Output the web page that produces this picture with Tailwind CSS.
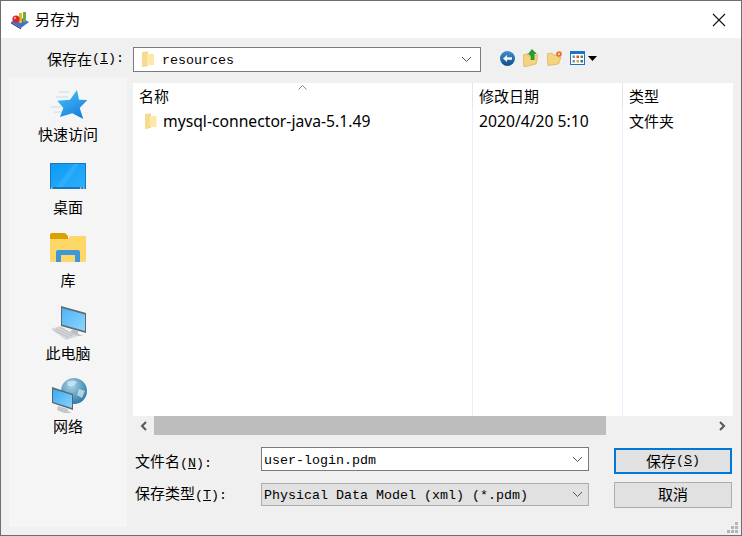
<!DOCTYPE html>
<html>
<head>
    <title>另存为</title>
    <script src="https://cdn.jsdelivr.net/npm/@tailwindcss/browser@4"></script>
</head>
<body class="bg-white">
<div class="w-[742px] h-[536px] flex flex-col overflow-hidden border border-[#6e6e6e] bg-[#f0f0f0] text-black text-[15px] font-['Noto_Sans','Noto_Sans_CJK_SC',sans-serif]">
    <!-- Title bar -->
    <div class="h-[37px] shrink-0 bg-white flex items-center pl-[9px] pr-[15px]">
        <svg class="w-[20px] h-[20px]" viewBox="0 0 20 20">
            <path d="M1 12 L10 7 L19 12 L11 18z" fill="#4a6fc0"/>
            <path d="M1 12 L11 18 L11 19.5 L1 13.5z" fill="#2b4a94"/>
            <rect x="9" y="3" width="3" height="10" fill="#e6b422"/>
            <rect x="13" y="2" width="3" height="10" fill="#6fae3c"/>
            <circle cx="6" cy="9" r="3.6" fill="#d9252a"/>
            <circle cx="5" cy="8" r="1.2" fill="#f59a9c"/>
        </svg>
        <span class="ml-[5px] leading-none">另存为</span>
        <svg class="ml-auto w-[14px] h-[14px]" viewBox="0 0 14 14" fill="none" stroke="#111" stroke-width="1.1">
            <path d="M1 1 L13 13 M13 1 L1 13"/>
        </svg>
    </div>

    <!-- Toolbar -->
    <div class="h-[39px] shrink-0 flex items-center pl-[46px]">
        <div class="w-[86px] flex items-center whitespace-nowrap mt-[3px]">保存在<span class="font-['Liberation_Mono'] text-[13.33px]">(<u>I</u>):</span></div>
        <div class="w-[348px] h-[25px] mt-[3px] bg-white border border-[#7a7a7a] flex items-center pl-[7px] pr-[8px]">
            <svg class="w-[14px] h-[17px]" viewBox="0 0 14 17">
                <path d="M1 1 L7 0.5 L7 15 L1 16z" fill="#f3d27a"/>
                <path d="M3 3 H13 V14 H3z" fill="#fbe9a9"/>
                <path d="M1 1 L6 2 L6 14 L1 16z" fill="#f7dc8e"/>
            </svg>
            <span class="ml-[7px] mt-[3px] font-['Liberation_Mono'] text-[13.33px]">resources</span>
            <svg class="ml-auto w-[11px] h-[7px]" viewBox="0 0 11 7" fill="none" stroke="#555" stroke-width="1"><path d="M1 1 L5.5 5.5 L10 1"/></svg>
        </div>
        <div class="ml-[19px] mt-[1px] flex items-center">
            <svg class="w-[15px] h-[15px]" viewBox="0 0 15 15">
                <defs><linearGradient id="b1" x1="0" y1="0" x2="0" y2="1"><stop offset="0" stop-color="#3f8fd0"/><stop offset="1" stop-color="#0d4f8a"/></linearGradient></defs>
                <circle cx="7.5" cy="7.5" r="7.5" fill="url(#b1)"/>
                <path d="M3 7.5 L7 4 V6.3 H12 V8.7 H7 V11z" fill="#f4f8fc"/>
            </svg>
            <svg class="ml-[8px] w-[15px] h-[18px]" viewBox="0 0 15 18">
                <path d="M0 6 L5 4.5 V7 L15 6 L13 15 L1 18z" fill="#f4d47e" stroke="#cfa84a" stroke-width="0.6"/>
                <path d="M9 0 L14 5 H11.5 V11 H7.5 C8 8 8 7 6.5 6 L5 5z" fill="#2f9a2c"/>
            </svg>
            <svg class="ml-[9px] w-[15px] h-[15px]" viewBox="0 0 15 15">
                <path d="M0 3 L5 2 L6 4 L11 4 V6 H14 L11.5 13 L1 14.500z" fill="#f4d47e" stroke="#cfa84a" stroke-width="0.6"/>
                <circle cx="12" cy="3" r="2.800" fill="#ee6a2c"/>
                <circle cx="12" cy="3" r="1.200" fill="#fbd08a"/>
            </svg>
            <div class="ml-[8px] flex items-center gap-[3px]">
                <svg class="w-[15px] h-[14px]" viewBox="0 0 15 14">
                    <rect x="0" y="0" width="15" height="14" fill="#1a73c9"/>
                    <rect x="1" y="3" width="13" height="10" fill="#fff"/>
                    <rect x="2.500" y="4.500" width="2.500" height="2.500" fill="#7d8ea8"/>
                    <rect x="6.500" y="4.500" width="2.500" height="2.500" fill="#d24a43"/>
                    <rect x="10.500" y="4.500" width="2.500" height="2.500" fill="#3d9a48"/>
                    <rect x="2.500" y="9" width="2.500" height="2.500" fill="#7d8ea8"/>
                    <rect x="6.500" y="9" width="2.500" height="2.500" fill="#e0a62c"/>
                    <rect x="10.500" y="9" width="2.500" height="2.500" fill="#2a6fc0"/>
                </svg>
                <svg class="w-[9px] h-[5px]" viewBox="0 0 9 5"><path d="M0 0 H9 L4.500 5z" fill="#000"/></svg>
            </div>
        </div>
    </div>

    <div class="flex-1 flex pl-[8px] min-h-0">
        <!-- Places sidebar -->
        <div class="w-[118px] h-[450px] bg-[#f5f5f5] pt-[8px] flex flex-col">
            <div class="h-[73px] flex flex-col items-center">
                <svg class="w-[40px] h-[39px] shrink-0" viewBox="0 0 40 39">
                    <defs><linearGradient id="st" x1="0" y1="0" x2="0.6" y2="1"><stop offset="0" stop-color="#4fc0fa"/><stop offset="1" stop-color="#1684e0"/></linearGradient></defs>
                    <path d="M29 5 L31 14.700 L39.300 15 L31.700 23 L35.300 34 L24.300 28.300 L12 32 L15.300 23 L9.300 15.700 L22 14.700z" fill="url(#st)"/>
                    <path d="M11 7 H21 M8 12 H20 M3 22 H13 M6 27 H13" stroke="#bcdff3" stroke-width="1"/>
                </svg>
                <span class="leading-[20px]">快速访问</span>
            </div>
            <div class="h-[73px] flex flex-col items-center">
                <svg class="w-[40px] h-[39px] shrink-0" viewBox="0 0 40 39">
                    <defs><linearGradient id="dk" x1="0" y1="0" x2="1" y2="1"><stop offset="0" stop-color="#0a9bf5"/><stop offset="1" stop-color="#2eaefc"/></linearGradient></defs>
                    <rect x="2" y="5" width="36" height="26" fill="#1777b8"/>
                    <rect x="3" y="6" width="34" height="23" fill="url(#dk)"/>
                    <path d="M8 29 L26 6 H31 L15 29z" fill="#3ab3fb" opacity="0.6"/>
                    <path d="M3 30 h1.500 M32 30 h1.500 M35 30 h1.500" stroke="#fff"/>
                </svg>
                <span class="leading-[20px]">桌面</span>
            </div>
            <div class="h-[73px] flex flex-col items-center">
                <svg class="w-[40px] h-[39px] shrink-0" viewBox="0 0 40 39">
                    <path d="M2 4 Q2 2 4 2 H17 L20 5 V8 H2z" fill="#dca000"/>
                    <path d="M2 8 H20 L22 5 H37 Q38 5 38 6 V30 Q38 31 37 31 H3 Q2 31 2 30z" fill="#ffd766"/>
                    <path d="M8 31 V21 Q8 19 10 19 H30 Q32 19 32 21 V31 H27 V24 H13 V31z" fill="#3e97d8"/>
                </svg>
                <span class="leading-[20px]">库</span>
            </div>
            <div class="h-[73px] flex flex-col items-center">
                <svg class="w-[40px] h-[39px] shrink-0" viewBox="0 0 40 39">
                    <defs><linearGradient id="pc" x1="0" y1="0" x2="1" y2="1"><stop offset="0" stop-color="#4db4f6"/><stop offset="1" stop-color="#8fd4fb"/></linearGradient></defs>
                    <path d="M13 2 L38 9 V29 L13 22z" fill="#5c6a74"/>
                    <path d="M14 4 L37 10.500 V27 L14 20.500z" fill="url(#pc)"/>
                    <path d="M24 25 L30 27 V30 L35 31.500 L30 32 L22 30z" fill="#b8bec3"/>
                    <path d="M3 25 L12 22 L30 32 L18 36z" fill="#d5d8da"/>
                    <path d="M8 25 L24 32 M6 26.500 L21 33.500 M12 23.500 L26 31" stroke="#aeb3b7" stroke-width="0.700"/>
                </svg>
                <span class="leading-[20px]">此电脑</span>
            </div>
            <div class="h-[73px] flex flex-col items-center">
                <svg class="w-[40px] h-[39px] shrink-0" viewBox="0 0 40 39">
                    <defs>
                        <radialGradient id="gl" cx="0.4" cy="0.3" r="0.8"><stop offset="0" stop-color="#a7d4e8"/><stop offset="1" stop-color="#216f9f"/></radialGradient>
                        <linearGradient id="sc" x1="0" y1="0" x2="1" y2="1"><stop offset="0" stop-color="#39a9f2"/><stop offset="1" stop-color="#89d3fb"/></linearGradient>
                    </defs>
                    <circle cx="26" cy="14" r="13" fill="url(#gl)"/>
                    <path d="M19 5 Q25 2 29 5 L26 9 L20 9z M31 12 L37 14 L34 21 L29 18z" fill="#d8ebf3" opacity="0.7"/>
                    <path d="M4 10 L25 17 V33 L4 26z" fill="#59666f"/>
                    <path d="M5 12 L24 18 V31 L5 25z" fill="url(#sc)"/>
                    <path d="M10 29 L20 32 V34 L24 36 H16 L9 33z" fill="#c2c7ca"/>
                </svg>
                <span class="leading-[20px]">网络</span>
            </div>
        </div>

        <div class="ml-[6px] w-[600px] flex flex-col">
            <!-- File list -->
            <div class="relative mt-[6px] h-[333px] shrink-0 bg-white">
                <svg class="absolute left-[165px] top-[2px] w-[9px] h-[5px]" viewBox="0 0 9 5" fill="none" stroke="#8a8a8a"><path d="M0.500 4.500 L4.500 0.500 L8.500 4.500"/></svg>
                <div class="flex h-[25px] items-center">
                    <div class="w-[340px] h-full pl-[6px] pt-[2px] border-r border-[#e5e5e5] flex items-center">名称</div>
                    <div class="w-[150px] h-full pl-[6px] pt-[2px] border-r border-[#e5e5e5] flex items-center">修改日期</div>
                    <div class="flex-1 pl-[6px] pt-[2px]">类型</div>
                </div>
                <div class="flex h-[308px]">
                    <div class="w-[340px] h-full pl-[11px] pt-[2px] border-r border-[#e8f1fb]">
                        <div class="flex items-center h-[22px]">
                            <svg class="w-[13px] h-[17px]" viewBox="0 0 13 17">
                                <path d="M1 1 L7 0.500 L7 15 L1 16z" fill="#f3d27a"/>
                                <path d="M3 3 H12.500 V14 H3z" fill="#fbe9a9"/>
                                <path d="M1 1 L6 2 L6 14 L1 16z" fill="#f7dc8e"/>
                            </svg>
                            <span class="ml-[6px] mt-[2px] text-[15.7px]">mysql-connector-java-5.1.49</span>
                        </div>
                    </div>
                    <div class="w-[150px] h-full pl-[6px] pt-[2px] border-r border-[#e8f1fb]">
                        <div class="h-[22px] pt-[2px] flex items-center text-[15.7px]">2020/4/20 5:10</div>
                    </div>
                    <div class="flex-1 pl-[6px] pt-[2px]">
                        <div class="h-[22px] flex items-center">文件夹</div>
                    </div>
                </div>
            </div>

            <!-- Horizontal scrollbar -->
            <div class="h-[19px] shrink-0 flex items-center">
                <div class="w-[21px] flex justify-center">
                    <svg class="w-[7px] h-[10px]" viewBox="0 0 7 10" fill="none" stroke="#555" stroke-width="2"><path d="M6 1 L2 5 L6 9"/></svg>
                </div>
                <div class="w-[452px] h-full bg-[#bdbdbd]"></div>
                <div class="ml-auto w-[21px] flex justify-center">
                    <svg class="w-[7px] h-[10px]" viewBox="0 0 7 10" fill="none" stroke="#555" stroke-width="2"><path d="M1 1 L5 5 L1 9"/></svg>
                </div>
            </div>

            <!-- File name and type -->
            <div class="flex">
                <div class="w-[456px] pt-[12px] flex flex-col gap-[12px]">
                    <div class="flex items-center h-[24px]">
                        <div class="w-[128px] pl-[2px] pt-[6px] whitespace-nowrap">文件名<span class="font-['Liberation_Mono'] text-[13.33px]">(<u>N</u>):</span></div>
                        <div class="w-[328px] h-full bg-white border border-[#7a7a7a] flex items-center pl-[2px] pr-[5px]">
                            <span class="mt-[3px] font-['Liberation_Mono'] text-[13.33px]">user-login.pdm</span>
                            <svg class="ml-auto w-[11px] h-[7px]" viewBox="0 0 11 7" fill="none" stroke="#555"><path d="M1 1 L5.500 5.500 L10 1"/></svg>
                        </div>
                    </div>
                    <div class="flex items-center h-[23px]">
                        <div class="w-[128px] pl-[2px] mt-[-2px] whitespace-nowrap">保存类型<span class="font-['Liberation_Mono'] text-[13.33px]">(<u>T</u>):</span></div>
                        <div class="w-[328px] h-full bg-[#e1e1e1] border border-[#adadad] flex items-center pl-[2px] pr-[5px]">
                            <span class="mt-[2px] font-['Liberation_Mono'] text-[13.33px] whitespace-pre">Physical Data Model (xml) (*.pdm)</span>
                            <svg class="ml-auto w-[11px] h-[7px]" viewBox="0 0 11 7" fill="none" stroke="#555"><path d="M1 1 L5.500 5.500 L10 1"/></svg>
                        </div>
                    </div>
                </div>
                <div class="ml-[25px] pt-[13px] flex flex-col gap-[8px]">
                    <div class="w-[118px] h-[26px] bg-[#e1e1e1] border-2 border-[#0078d7] flex items-center justify-center">保存<span class="font-['Liberation_Mono'] text-[13.33px]">(<u>S</u>)</span></div>
                    <div class="w-[118px] h-[26px] pb-[2px] bg-[#e1e1e1] border border-[#adadad] flex items-center justify-center">取消</div>
                </div>
            </div>
        </div>
    </div>

    <!-- Resize grip -->
    <svg class="absolute left-[727px] top-[522px] w-[11px] h-[11px]" viewBox="0 0 11 11" fill="#b4b4b4">
        <rect x="8" y="0" width="3" height="3"/>
        <rect x="4" y="4" width="3" height="3"/><rect x="8" y="4" width="3" height="3"/>
        <rect x="0" y="8" width="3" height="3"/><rect x="4" y="8" width="3" height="3"/><rect x="8" y="8" width="3" height="3"/>
    </svg>
</div>
</body>
</html>
